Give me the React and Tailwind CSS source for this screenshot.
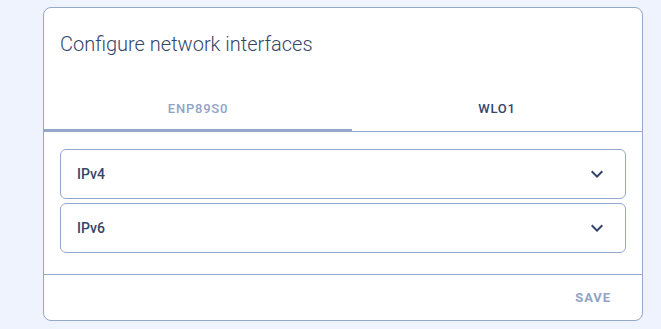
import React from "react";

function Chevron() {
  return (
    <svg width="24" height="24" viewBox="0 0 24 24" className="shrink-0">
      <path d="M16.59 8.59 12 13.17 7.41 8.59 6 10l6 6 6-6z" fill="#34456a" />
    </svg>
  );
}

function Row({ label }) {
  return (
    <div className="flex h-[50px] items-center justify-between rounded-[6px] border border-[#94a8c9] pl-4 pr-4">
      <span className="text-[14px] font-medium text-[#34456a]">{label}</span>
      <Chevron />
    </div>
  );
}

export default function App() {
  return (
    <div
      className="min-h-[329px] w-full bg-[#eef3fd] pt-[7px]"
      style={{ fontFamily: "Roboto, 'Liberation Sans', sans-serif" }}
    >
      <div className="ml-[43px] flex h-[314px] w-[600px] flex-col overflow-hidden rounded-[8px] border border-[#94a8c9] bg-white">
        <div className="px-4 pb-[28px] pt-6">
          <h2 className="text-[20px] font-light leading-[24px] text-[#34456a]">
            Configure network interfaces
          </h2>
        </div>
        <div className="flex h-[48px] border-b border-[#94a8c9]">
          <div className="relative flex w-[308px] items-center justify-center pt-[2px] text-[13px] font-medium uppercase tracking-[0.06em] text-[#8fa4c6]">
            ENP89S0
            <div className="absolute bottom-0 left-0 right-0 h-[2px] bg-[#94a8c9]" />
          </div>
          <div className="flex flex-1 items-center justify-center pt-[2px] text-[13px] font-medium uppercase tracking-[0.06em] text-[#34456a]">
            WLO1
          </div>
        </div>
        <div className="flex flex-col gap-1 px-4 pb-[21px] pt-[17px]">
          <Row label="IPv4" />
          <Row label="IPv6" />
        </div>
        <div className="flex flex-1 items-center justify-end border-t border-[#94a8c9] px-4">
          <span className="pr-[15px] text-[13px] font-bold uppercase tracking-[0.07em] text-[#8fa4c6]">
            Save
          </span>
        </div>
      </div>
    </div>
  );
}
